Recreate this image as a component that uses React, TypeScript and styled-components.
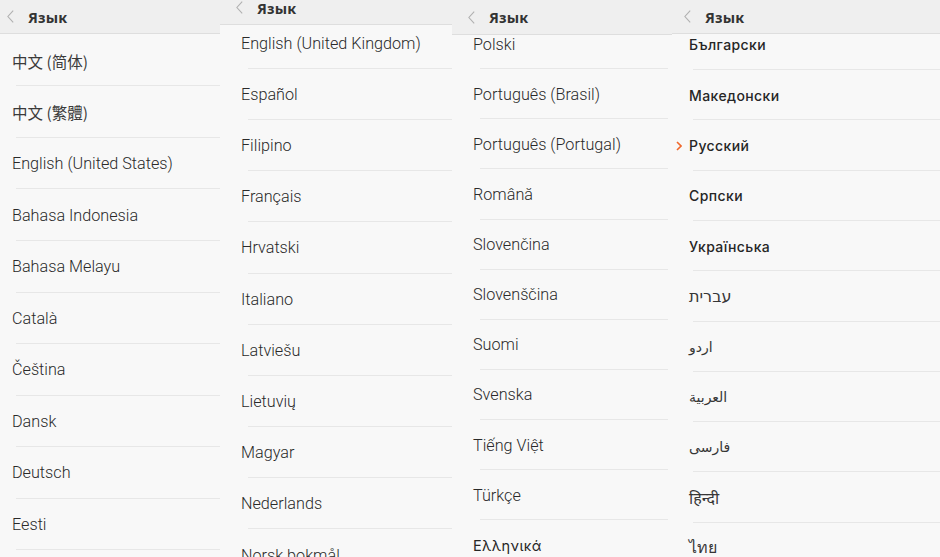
import React from 'react';
import styled, { createGlobalStyle } from 'styled-components';

const GlobalStyle = createGlobalStyle`
  html, body {
    margin: 0;
    padding: 0;
    background: #f7f7f7;
  }
  body {
    font-family: Roboto, "Noto Sans", "DejaVu Sans", sans-serif;
  }
`;

type Script = 'latin' | 'sc' | 'tc' | 'cyr' | 'greek' | 'heb' | 'arab' | 'deva' | 'thai';

type PanelSpec = {
  width: number;
  headerHeight: number;
  titleLift: number;
  headerPad: number;
  pitch: number;
  offset: number;
  textPad: number;
  divLeft: number;
  divRight: number;
  items: [string, Script][];
  selected?: string;
};

const L = (s: string): [string, Script] => [s, 'latin'];

const panels: PanelSpec[] = [
  {
    width: 220,
    headerHeight: 34,
    titleLift: 0,
    headerPad: 7,
    pitch: 51.55,
    offset: 0.8,
    textPad: 12,
    divLeft: 4,
    divRight: 0,
    items: [
      ['中文 (简体)', 'sc'],
      ['中文 (繁體)', 'tc'],
      L('English (United States)'),
      L('Bahasa Indonesia'),
      L('Bahasa Melayu'),
      L('Català'),
      L('Čeština'),
      L('Dansk'),
      L('Deutsch'),
      L('Eesti'),
    ],
  },
  {
    width: 232,
    headerHeight: 25,
    titleLift: 9,
    headerPad: 16,
    pitch: 51.2,
    offset: -7.4,
    textPad: 21,
    divLeft: 7,
    divRight: 0,
    items: [
      L('English (United Kingdom)'),
      L('Español'),
      L('Filipino'),
      L('Français'),
      L('Hrvatski'),
      L('Italiano'),
      L('Latviešu'),
      L('Lietuvių'),
      L('Magyar'),
      L('Nederlands'),
      L('Norsk bokmål'),
    ],
  },
  {
    width: 220,
    headerHeight: 35,
    titleLift: 0,
    headerPad: 16,
    pitch: 50.1,
    offset: -15.8,
    textPad: 21,
    divLeft: 7,
    divRight: 4,
    items: [
      L('Polski'),
      L('Português (Brasil)'),
      L('Português (Portugal)'),
      L('Română'),
      L('Slovenčina'),
      L('Slovenščina'),
      L('Suomi'),
      L('Svenska'),
      L('Tiếng Việt'),
      L('Türkçe'),
      ['Ελληνικά', 'greek'],
    ],
  },
  {
    width: 268,
    headerHeight: 34,
    titleLift: 0,
    headerPad: 12,
    pitch: 50.3,
    offset: -14.2,
    textPad: 17,
    divLeft: 4,
    divRight: 0,
    selected: 'Русский',
    items: [
      ['Български', 'cyr'],
      ['Македонски', 'cyr'],
      ['Русский', 'cyr'],
      ['Српски', 'cyr'],
      ['Українська', 'cyr'],
      ['עברית', 'heb'],
      ['اردو', 'arab'],
      ['العربية', 'arab'],
      ['فارسی', 'arab'],
      ['हिन्दी', 'deva'],
      ['ไทย', 'thai'],
    ],
  },
];

const Screen = styled.div`
  display: flex;
  width: 940px;
  height: 557px;
  overflow: hidden;
  background: #f7f7f7;
`;

const Panel = styled.section<{ $width: number }>`
  display: flex;
  flex-direction: column;
  width: ${(p) => p.$width}px;
  flex: none;
  height: 100%;
  overflow: hidden;
  background: #f8f8f8;
`;

const Header = styled.header<{ $height: number; $lift: number; $pad: number }>`
  position: relative;
  z-index: 1;
  flex: none;
  display: flex;
  align-items: center;
  gap: 14px;
  height: ${(p) => p.$height}px;
  padding: 0 0 ${(p) => p.$lift}px ${(p) => p.$pad}px;
  box-sizing: border-box;
  background: #efefef;
  border-bottom: 1px solid #dedede;
`;

const Title = styled.span`
  font-family: "Noto Sans", "DejaVu Sans", sans-serif;
  font-weight: 700;
  font-size: 14.5px;
  color: #333;
  letter-spacing: 0.2px;
`;

const Viewport = styled.div`
  flex: 1;
  overflow: hidden;
`;

const List = styled.ul<{ $offset: number }>`
  list-style: none;
  margin: ${(p) => p.$offset}px 0 0;
  padding: 0;
`;

const Row = styled.li<{ $pitch: number; $pad: number; $divLeft: number; $divRight: number }>`
  position: relative;
  display: flex;
  align-items: center;
  height: ${(p) => p.$pitch}px;
  padding-left: ${(p) => p.$pad}px;
  box-sizing: border-box;
  color: #363636;
  white-space: nowrap;

  &::after {
    content: '';
    position: absolute;
    bottom: 0;
    left: ${(p) => p.$pad + p.$divLeft}px;
    right: ${(p) => p.$divRight}px;
    height: 1px;
    background: #e7e7e7;
  }
`;

const fonts: Record<Script, string> = {
  latin: 'font-family: Roboto, sans-serif; font-weight: 300; font-size: 16.2px; color: #2a2a2a;',
  sc: 'font-family: "Noto Sans CJK SC", sans-serif; font-weight: 400; font-size: 15.5px; color: #3a3a3a;',
  tc: 'font-family: "Noto Sans CJK TC", sans-serif; font-weight: 400; font-size: 15.5px; color: #3a3a3a;',
  cyr: 'font-family: Inter, "Noto Sans", sans-serif; font-weight: 500; font-size: 14px; letter-spacing: 0.4px; color: #262626;',
  greek: 'font-family: Inter, "Noto Sans", sans-serif; font-weight: 400; font-size: 14.5px; letter-spacing: 0.4px; color: #262626;',
  heb: 'font-family: "DejaVu Sans", "Noto Sans", sans-serif; font-size: 16px;',
  arab: 'font-family: "DejaVu Sans", "Noto Sans", sans-serif; font-size: 14px;',
  deva: 'font-family: "Noto Sans", "DejaVu Sans", sans-serif; font-size: 16px;',
  thai: 'font-family: "Noto Sans", "DejaVu Sans", sans-serif; font-size: 16px;',
};

const Label = styled.span<{ $script: Script }>`
  unicode-bidi: isolate;
  ${(p) => fonts[p.$script]}
`;

const Marker = styled.svg`
  position: absolute;
  left: 4px;
  top: 50%;
  margin-top: -5px;
`;

const BackChevron = () => (
  <svg width="7" height="13" viewBox="0 0 7 13">
    <path d="M6.2 0.6 L0.9 6.5 L6.2 12.4" fill="none" stroke="#b0b0b0" strokeWidth="1.1" />
  </svg>
);

export default function App() {
  return (
    <>
      <GlobalStyle />
      <Screen>
        {panels.map((p, i) => (
          <Panel key={i} $width={p.width}>
            <Header $height={p.headerHeight} $lift={p.titleLift} $pad={p.headerPad}>
              <BackChevron />
              <Title>Язык</Title>
            </Header>
            <Viewport>
              <List $offset={p.offset}>
                {p.items.map(([item, script]) => (
                  <Row key={item} $pitch={p.pitch} $pad={p.textPad} $divLeft={p.divLeft} $divRight={p.divRight}>
                    {p.selected === item && (
                      <Marker width="6" height="10" viewBox="0 0 6 10">
                        <path d="M1 1 L5 5 L1 9" fill="none" stroke="#f0682c" strokeWidth="1.6" />
                      </Marker>
                    )}
                    <Label $script={script}>{item}</Label>
                  </Row>
                ))}
              </List>
            </Viewport>
          </Panel>
        ))}
      </Screen>
    </>
  );
}
